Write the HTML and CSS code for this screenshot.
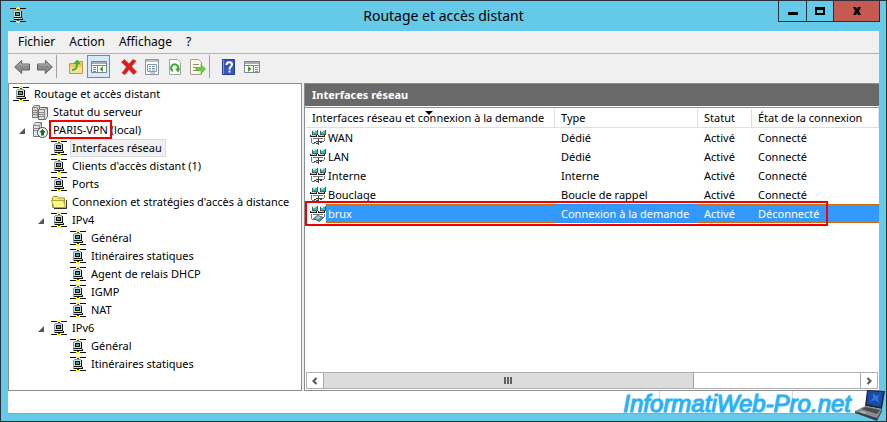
FILE: index.html
```html
<!DOCTYPE html>
<html lang="fr">
<head>
  <meta charset="UTF-8">
  <meta name="viewport" content="width=device-width, initial-scale=1.0">
  <title>Routage et accès distant</title>
  <link rel="stylesheet" href="styles.css">
</head>
<body>
  <!-- Icônes partagées -->
  <svg class="sprite" aria-hidden="true">
    <symbol id="net" viewBox="0 0 16 16" shape-rendering="crispEdges">
      <path fill="#111" d="M0 1h16v1H0zM0 14h16v1H0z"/>
      <path fill="#ff0" d="M6 1h4v1H6zM6 14h4v1H6zM7 0h2v1H7zM7 15h2v1H7z"/>
      <path fill="#444" d="M7 2h2v1H7zM7 13h2v1H7z"/>
      <path fill="#999" d="M4 3h7v1H4zM3 4h1v7H3zM3 11h1v2H3z"/>
      <path fill="#111" d="M11 4h1v7h-1zM4 10h8v1H4zM12 11h1v2h-1zM4 12h9v1H4z"/>
      <path fill="#d8d8d8" d="M4 4h7v6H4zM4 11h8v1H4z"/>
      <path fill="#111" d="M5 5h5v4H5z"/>
      <path fill="#1fb5ae" d="M6 6h3v2H6z"/>
    </symbol>
    <symbol id="servers" viewBox="0 0 16 16">
      <path fill="#d6d6d2" stroke="#777" d="M.5 3.500l2-2h5v10l-2 2h-5z"/>
      <path fill="#e0e0dc" stroke="#666" d="M6.500 5.500l2-2h7v9l-2 3h-7z"/>
      <path stroke="#888" fill="none" d="M0 3.500h5.500v10M6 5.500h6.500v10M12.500 5.500l3-2M1 6.500h4M1 8.500h4M1 10.500h4M7 8.500h5M7 10.500h5M7 12.500h5"/>
    </symbol>
    <symbol id="server-ok" viewBox="0 0 16 16">
      <path fill="#e4e4de" stroke="#777" d="M1.500 3.500l2-3h6v11l-2 3h-6z"/>
      <path stroke="#888" fill="none" d="M1 3.500h6.500v11M7.500 3.500l2-3M2 6.500h5M2 8.500h5"/>
      <circle cx="10.500" cy="10.500" r="5" fill="#fff" stroke="#444"/>
      <path fill="#087a12" d="M10.500 7l3.500 3.500h-2v3H9v-3H7z"/>
    </symbol>
    <symbol id="folder" viewBox="0 0 16 16">
      <path fill="#f4ea78" stroke="#a09320" d="M1.500 13.500v-10l1-1h4l1 1.500h6v9.500z"/>
      <path fill="#fff68c" stroke="#b0a430" d="M.5 6.500h12l2 7H3z"/>
      <path fill="none" stroke="#333" d="M3 14.500h12.500V6"/>
    </symbol>
    <symbol id="link" viewBox="0 0 16 16" shape-rendering="crispEdges">
      <path fill="#555" d="M2 0h6v5H2zM10 0h6v5h-6z"/>
      <path fill="#d8e4e4" d="M2 0h5v1H2zM10 0h5v1h-5z"/>
      <path fill="#28c8bd" d="M3 1h4v3H3zM11 1h4v3h-4z"/>
      <path fill="#c8fff8" d="M3 1h2v1H3zM11 1h2v1h-2z"/>
      <path fill="#222" d="M0 5h7v2H0zM8 5h7v2H8z"/>
      <path fill="#ccc" d="M1 5h5v1H1zM9 5h5v1H9z"/>
      <path fill="#777" d="M1 8h1v5H1zM2 13h3v1H2zM14 8h1v3h-1zM12 11h2v1h-2zM3 8h10v1H3z"/>
    </symbol>
    <symbol id="plug" viewBox="0 0 16 16" shape-rendering="crispEdges">
      <path fill="#444" d="M4 12h2v-1h2V9h1v2h3v1h-3v3H8v-1H6v-1H4zM10 12h2v1h-2z"/>
      <path fill="#ccc" d="M6 12h2v1H6z"/>
    </symbol>
    <symbol id="modem" viewBox="0 0 16 16">
      <path fill="#5a9aa0" stroke="#3d6570" d="M3.500 12.500l4-3 6 2-4 4z"/>
      <path fill="#a3cfd2" d="M5 12l3-2 3 1-3 2z"/>
    </symbol>
    <symbol id="panel" viewBox="0 0 16 16">
      <path fill="#fff" stroke="#7d8590" d="M.5 2.500h15v11H.5z"/>
      <path fill="#a5adb8" d="M1 3h14v2H1z"/>
      <path stroke="#7d8590" d="M1 6.500h14"/>
    </symbol>
  </svg>

  <div class="window">
    <header class="titlebar">
      <svg class="app-icon"><use href="#net"/></svg>
      <h1>Routage et accès distant</h1>
      <div class="caption-buttons">
        <button type="button" class="minimize" aria-label="Réduire"><svg viewBox="0 0 12 10"><path d="M1 6h10v3H1z"/></svg></button>
        <button type="button" class="maximize" aria-label="Agrandir"><svg viewBox="0 0 12 10"><path fill-rule="evenodd" d="M1 1h10v8H1zM3 4v3h6V4z"/></svg></button>
        <button type="button" class="close" aria-label="Fermer"><svg viewBox="0 0 12 10"><path d="M2 1h3l1 2 1-2h3L8 5l2 4H7L6 7 5 9H2l2-4z"/></svg></button>
      </div>
    </header>

    <div class="client">
      <nav class="menubar">
        <button type="button">Fichier</button>
        <button type="button">Action</button>
        <button type="button">Affichage</button>
        <button type="button">?</button>
      </nav>

      <div class="toolbar">
        <div class="tool-group ruled">
          <button type="button" aria-label="Précédent"><svg viewBox="0 0 16 16"><path fill="#8b8b8b" stroke="#626262" d="M.7 8l7-6.500V5h7.800v6H7.700v3.500z"/><path fill="none" stroke="#b5b5b5" d="M3 7.500l4-3.500v2h7.500"/></svg></button>
          <button type="button" aria-label="Suivant"><svg viewBox="0 0 16 16"><path fill="#8b8b8b" stroke="#626262" d="M15.300 8l-7-6.500V5H.5v6h7.800v3.500z"/><path stroke="#b5b5b5" fill="none" d="M1.500 6h7.800V4l3.700 3.500"/></svg></button>
        </div>
        <div class="tool-group">
          <button type="button" aria-label="Dossier parent"><svg viewBox="0 0 16 16"><path fill="#f0cc6c" stroke="#c59a3c" d="M1.500 14.500V4.500h5l1-2h7v12z"/><path fill="#f8df93" d="M2 8h12v6H2z"/><path fill="none" stroke="#42b72a" stroke-width="2" d="M4 11c4 0 5-3 5-6"/><path fill="#42b72a" d="M5 5l4.500-4.500L13 5.500z"/></svg></button>
          <button type="button" class="pressed" aria-label="Afficher l'arborescence"><svg viewBox="0 0 16 16"><use href="#panel"/><path stroke="#7d8590" d="M6.500 7v6M2 8.500h3M2 10.500h3M2 12.500h3"/><path fill="#3aa72a" d="M12 7v6L8.500 10z"/></svg></button>
        </div>
        <div class="tool-group ruled">
          <button type="button" aria-label="Supprimer"><svg viewBox="0 0 16 16"><path fill="#e01b1b" stroke="#b01010" stroke-width=".5" d="M.5 3l3-2.500L8 5l4-4.500 3 1.500-4.500 5.500L15.500 13l-3 2.500L8 10.500 4 15.500 1 14l4.500-6z"/></svg></button>
          <button type="button" aria-label="Propriétés"><svg viewBox="0 0 16 16"><path fill="#fff" stroke="#8d949c" d="M1.500.500h13v15h-13z"/><path fill="#b9c2cc" d="M2 1h12v2H2z"/><path fill="none" stroke="#7d9cb8" d="M3.500 5.500h9v7h-9zM5 7.500h2M8 7.500h3M5 9.500h2M8 9.500h3M5 11h2M8 11h3M6 14h5"/></svg></button>
          <button type="button" aria-label="Actualiser"><svg viewBox="0 0 16 16"><path fill="#fff" stroke="#a4a4a4" d="M2.500.5h8l3 3v12h-11z"/><path fill="none" stroke="#37ad32" stroke-width="2" d="M6 12A3.500 3.500 0 1 1 11 10"/><path fill="#37ad32" d="M8 9.500h5.500L11 13.500z"/></svg></button>
          <button type="button" aria-label="Exporter la liste"><svg viewBox="0 0 16 16"><path fill="#fff8e4" stroke="#a8a08c" d="M.5.500h8l3 3v12H.5z"/><path stroke="#8c8c8c" d="M3 5.500h6M3 8.500h4M3 11.500h6"/><path fill="#70ca3b" stroke="#43a523" stroke-width=".6" d="M6 8.500h5V5.500l4.500 4.500-4.500 4.500v-3H6z"/></svg></button>
        </div>
        <div class="tool-group">
          <button type="button" aria-label="Aide"><svg viewBox="0 0 16 16"><path fill="#3558bd" stroke="#243f94" d="M1.500.500h12v15h-12z"/><path fill="#7e98df" d="M2 1h1v14H2z"/><path fill="none" stroke="#fff" stroke-width="2" d="M5.500 6c0-4 5.500-3.500 5.500-.5 0 2-2.500 2-2.500 5M8.500 11.500v2"/></svg></button>
          <button type="button" aria-label="Volet Actions"><svg viewBox="0 0 16 16"><use href="#panel"/><path stroke="#7d8590" d="M9.500 7v6M11 8.500h3M11 10.500h3M11 12.500h3"/><path fill="#3aa72a" d="M4 7v6l3.500-3z"/></svg></button>
        </div>
      </div>

      <main class="panes">
        <section class="tree-pane">
          <ul class="tree">
            <li><div class="node"><svg><use href="#net"/></svg><span class="label">Routage et accès distant</span></div>
              <ul>
                <li><div class="node"><svg><use href="#servers"/></svg><span class="label">Statut du serveur</span></div></li>
                <li><div class="node expanded"><svg><use href="#server-ok"/></svg><span class="label"><span class="marked">PARIS-VPN</span> (local)</span></div>
                  <ul>
                    <li><div class="node"><svg><use href="#net"/></svg><span class="label selected">Interfaces réseau</span></div></li>
                    <li><div class="node"><svg><use href="#net"/></svg><span class="label">Clients d'accès distant (1)</span></div></li>
                    <li><div class="node"><svg><use href="#net"/></svg><span class="label">Ports</span></div></li>
                    <li><div class="node"><svg><use href="#folder"/></svg><span class="label">Connexion et stratégies d'accès à distance</span></div></li>
                    <li><div class="node expanded"><svg><use href="#net"/></svg><span class="label">IPv4</span></div>
                      <ul>
                        <li><div class="node"><svg><use href="#net"/></svg><span class="label">Général</span></div></li>
                        <li><div class="node"><svg><use href="#net"/></svg><span class="label">Itinéraires statiques</span></div></li>
                        <li><div class="node"><svg><use href="#net"/></svg><span class="label">Agent de relais DHCP</span></div></li>
                        <li><div class="node"><svg><use href="#net"/></svg><span class="label">IGMP</span></div></li>
                        <li><div class="node"><svg><use href="#net"/></svg><span class="label">NAT</span></div></li>
                      </ul>
                    </li>
                    <li><div class="node expanded"><svg><use href="#net"/></svg><span class="label">IPv6</span></div>
                      <ul>
                        <li><div class="node"><svg><use href="#net"/></svg><span class="label">Général</span></div></li>
                        <li><div class="node"><svg><use href="#net"/></svg><span class="label">Itinéraires statiques</span></div></li>
                      </ul>
                    </li>
                  </ul>
                </li>
              </ul>
            </li>
          </ul>
        </section>

        <section class="list-pane">
          <h2>Interfaces réseau</h2>
          <div class="list">
            <table>
              <colgroup><col class="col-name"><col class="col-type"><col class="col-status"><col></colgroup>
              <thead>
                <tr><th class="sorted">Interfaces réseau et connexion à la demande</th><th>Type</th><th>Statut</th><th>État de la connexion</th></tr>
              </thead>
              <tbody>
                <tr><td><div class="name"><svg viewBox="0 0 16 16"><use href="#link"/><use href="#plug"/></svg><span>WAN</span></div></td><td>Dédié</td><td>Activé</td><td>Connecté</td></tr>
                <tr><td><div class="name"><svg viewBox="0 0 16 16"><use href="#link"/><use href="#plug"/></svg><span>LAN</span></div></td><td>Dédié</td><td>Activé</td><td>Connecté</td></tr>
                <tr><td><div class="name"><svg viewBox="0 0 16 16"><use href="#link"/><use href="#plug"/></svg><span>Interne</span></div></td><td>Interne</td><td>Activé</td><td>Connecté</td></tr>
                <tr><td><div class="name"><svg viewBox="0 0 16 16"><use href="#link"/><use href="#plug"/></svg><span>Bouclage</span></div></td><td>Boucle de rappel</td><td>Activé</td><td>Connecté</td></tr>
                <tr class="current"><td><div class="name"><svg viewBox="0 0 16 16"><use href="#link"/><use href="#modem"/></svg><span>brux</span></div></td><td>Connexion à la demande</td><td>Activé</td><td>Déconnecté</td></tr>
              </tbody>
            </table>
            <div class="row-mark"></div>
          </div>
          <div class="scrollbar">
            <button type="button" aria-label="Défiler à gauche"><svg viewBox="0 0 8 8"><path d="M5.500 1L2.500 4l3 3"/></svg></button>
            <div class="track"><div class="thumb"></div></div>
            <button type="button" aria-label="Défiler à droite"><svg viewBox="0 0 8 8"><path d="M2.500 1l3 3-3 3"/></svg></button>
          </div>
        </section>
      </main>

      <footer class="statusbar"><div></div><div></div><div></div></footer>
    </div>

    <div class="watermark">
      <span>InformatiWeb-Pro.net</span>
      <svg viewBox="0 0 31 31">
        <path fill="#23262d" d="M12 0l18 1-3 18-17-3z"/>
        <path fill="#174bb0" d="M13 1l15 1-2 15-14-3z"/>
        <path fill="#3577d0" d="M18 3l3 3 4-2-2 4 1 5-4-3-5 2 3-4z"/>
        <path fill="#8b8d91" d="M10 16l17 3-5 9-22-7z"/>
        <path fill="#4b4d52" d="M11 17l14 3-3 4-16-5z"/>
        <path fill="#b4b6b9" d="M6 21l5 1-1 2-5-1z"/>
        <path fill="#3b3d42" d="M0 21l22 7 5-9v2l-5 10L0 23z"/>
      </svg>
    </div>
  </div>
</body>
</html>
```
FILE: styles.css
```css
:root {
  --frame: #65c9e8;
  --frame-dark: #2b2f3c;
  --face: #f0f0f0;
  --line: #8c8e94;
  --mark: #f00000;
  --selection: #3399ff;
}

* {
  box-sizing: border-box;
}

body {
  margin: 0;
  font-family: "Noto Sans", "Open Sans", sans-serif;
  font-size: 11px;
  line-height: 18px;
  color: #000;
}

button {
  font: inherit;
  color: inherit;
  background: none;
  border: 0;
  margin: 0;
  padding: 0;
}

svg {
  display: block;
  flex: none;
  width: 16px;
  height: 16px;
}

.sprite {
  position: absolute;
  width: 0;
  height: 0;
}

.window {
  position: relative;
  display: flex;
  flex-direction: column;
  min-height: 100vh;
  padding: 0 7px 7px;
  background: var(--frame);
  border: 1px solid var(--frame-dark);
}

/* Barre de titre */
.titlebar {
  display: grid;
  grid-template-columns: 1fr auto 1fr;
  height: 30px;
}

.app-icon {
  margin: 6px 2px;
}

.titlebar h1 {
  margin: 0;
  font-size: 14px;
  font-weight: normal;
  line-height: 30px;
}

.caption-buttons {
  display: flex;
  justify-self: end;
  height: 21px;
  margin-right: -1px;
  border: 1px solid var(--frame-dark);
  border-top: 0;
}

.caption-buttons button {
  display: flex;
  align-items: center;
  justify-content: center;
  width: 27px;
}

.caption-buttons button + button {
  border-left: 1px solid var(--frame-dark);
}

.caption-buttons .close {
  width: 46px;
  background: #c75a50;
}

.caption-buttons svg {
  width: 12px;
  height: 10px;
}

.client {
  flex: 1;
  display: flex;
  flex-direction: column;
  background: var(--face);
}

/* Menus et barre d'outils */
.menubar {
  display: flex;
  gap: 14px;
  height: 23px;
  padding: 2px 10px;
  font-size: 12px;
  border-bottom: 1px solid #b4b4b4;
}

.toolbar {
  display: flex;
  gap: 7px;
  height: 29px;
  padding: 1px 2px;
}

.tool-group {
  display: flex;
  height: 23px;
}

.tool-group.ruled {
  border-right: 1px solid #a0a0a0;
}

.tool-group button {
  display: flex;
  align-items: center;
  justify-content: center;
  width: 23px;
}

.tool-group .pressed {
  background: #d5eafa;
  border: 1px solid #3c9ad6;
}

.panes {
  flex: 1;
  display: grid;
  grid-template-columns: 294px 1fr;
  gap: 2px;
}

/* Arborescence */
.tree-pane {
  padding: 1px 4px;
  background: #fff;
  border: 1px solid var(--line);
}

.tree,
.tree ul {
  list-style: none;
  margin: 0;
  padding: 0;
}

.tree ul {
  padding-left: 19px;
}

.node {
  position: relative;
  display: flex;
  align-items: center;
  gap: 3px;
  height: 18px;
  white-space: nowrap;
}

.node.expanded::before {
  content: "";
  position: absolute;
  left: -13px;
  top: 7px;
  width: 6px;
  height: 6px;
  background: #555;
  clip-path: polygon(100% 0, 100% 100%, 0 100%);
}

.label {
  padding: 0 2px;
}

.label.selected {
  padding-right: 4px;
  background: #f0f0f0;
  outline: 1px solid #dadada;
  outline-offset: -1px;
}

.marked {
  padding: 0 2px;
  margin: 0 -2px;
  outline: 2px solid var(--mark);
}

/* Liste des interfaces */
.list-pane {
  display: flex;
  flex-direction: column;
  min-width: 0;
  background: #fff;
  border: 1px solid var(--line);
  border-right: 0;
}

.list-pane h2 {
  margin: 0;
  padding: 0 7px;
  font-size: 11px;
  line-height: 22px;
  color: #fff;
  background: #696969;
}

.list {
  position: relative;
  flex: 1;
  padding: 1px 0 0 1px;
  margin-top: 1px;
  border-top: 1px solid var(--line);
}

table {
  width: 100%;
  table-layout: fixed;
  border-collapse: separate;
  border-spacing: 0;
  white-space: nowrap;
}

.col-name {
  width: 249px;
}

.col-type {
  width: 143px;
}

.col-status {
  width: 54px;
}

th,
td {
  height: 19px;
  padding: 0 0 0 6px;
  text-align: left;
  font-weight: normal;
}

th {
  border-right: 1px solid #dedfe1;
  border-bottom: 1px solid #dedfe1;
}

th.sorted {
  position: relative;
}

th.sorted::after {
  content: "";
  position: absolute;
  left: 50%;
  top: 2px;
  margin-left: -5px;
  border: 4px solid transparent;
  border-top-color: #000;
  border-bottom: 0;
}

td:first-child {
  padding-left: 4px;
}

.name {
  display: flex;
  align-items: center;
}

.name span {
  flex: 1;
  padding-left: 2px;
  line-height: 19px;
}

.current td {
  color: #fff;
}

.current td + td,
.current .name span {
  background:
    repeating-linear-gradient(90deg, #cc6600 0 1px, transparent 1px 2px) top / 100% 1px no-repeat,
    repeating-linear-gradient(90deg, #cc6600 0 1px, transparent 1px 2px) bottom / 100% 1px no-repeat,
    var(--selection);
}

.row-mark {
  position: absolute;
  top: 93px;
  left: 0;
  width: 523px;
  height: 25px;
  border: 2px solid var(--mark);
}

/* Barre de défilement */
.scrollbar {
  display: flex;
  height: 17px;
  margin: 1px;
  border: 1px solid #b0b0b0;
}

.scrollbar button {
  display: flex;
  align-items: center;
  justify-content: center;
  width: 16px;
}

.scrollbar svg {
  width: 8px;
  height: 8px;
  fill: none;
  stroke: #555;
  stroke-width: 2;
}

.track {
  flex: 1;
  border: 1px solid #a8a8a8;
  border-width: 0 1px;
}

.thumb {
  display: flex;
  align-items: center;
  justify-content: center;
  width: 69%;
  height: 100%;
  background: #dcdcdc;
  border-right: 1px solid #a0a0a0;
}

.thumb::before {
  content: "";
  width: 8px;
  height: 7px;
  background: repeating-linear-gradient(90deg, #606060 0 2px, transparent 2px 3px);
}

.statusbar {
  display: grid;
  grid-template-columns: 1fr 133px 87px;
  height: 23px;
  background: #fff;
  border-bottom: 1px solid #a0a0a0;
}

.statusbar div + div {
  border-left: 1px solid #d7d7d7;
}

.watermark {
  position: absolute;
  right: 0;
  bottom: 0;
  display: flex;
  align-items: center;
  gap: 4px;
  font: italic 24px/31px "Liberation Sans", Arial, sans-serif;
  color: #2fb0f5;
  -webkit-text-stroke: 1px #2fb0f5;
  text-shadow: 0 0 2px #6fd8ff;
}

.watermark span {
  padding-bottom: 4px;
  line-height: 27px;
}

.watermark svg {
  width: 31px;
  height: 31px;
}
```
